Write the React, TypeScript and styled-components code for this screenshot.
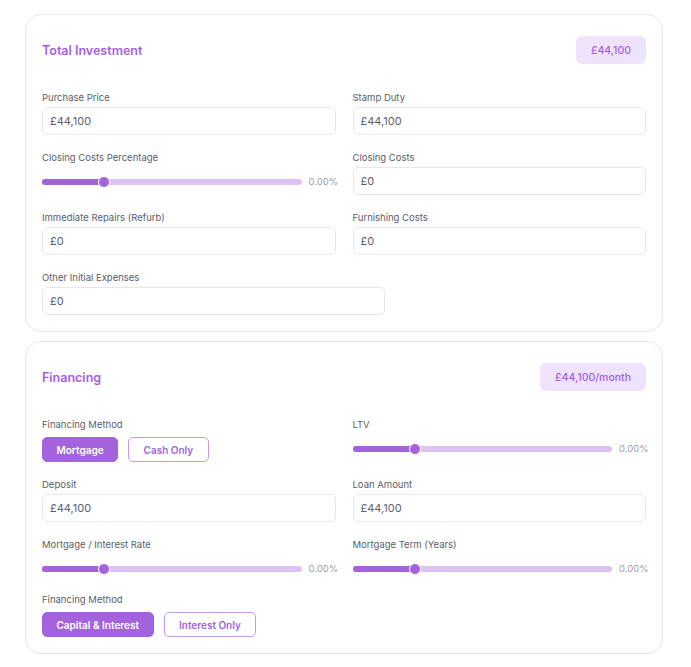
import { createGlobalStyle } from "styled-components";
import styled from "styled-components";

const Colors = {
    purple: "#a463dd",
    purpleLight: "#dcc3f4",
    outline: "#c397ee",
    badge: "#efe3fb",
    title: "#a45ee2",
    border: "#e7e7eb",
    label: "#5d5d68",
    text: "#60606a",
    muted: "#a0a0aa",
};

const GlobalStyle = createGlobalStyle`
    * { box-sizing: border-box; }
    body {
        margin: 0;
        background: #ffffff;
        font-family: Inter, "Noto Sans", sans-serif;
        -webkit-font-smoothing: antialiased;
    }
`;

interface SliderProps {
    value: number;
}

const Slider = ({ value }: SliderProps) => (
    <SliderRow>
        <Track>
            <Fill style={{ width: `${value}%` }} />
            <Thumb style={{ left: `${value}%` }} />
        </Track>
        <SliderValue>0.00%</SliderValue>
    </SliderRow>
);

interface FieldProps {
    label: string;
    value?: string;
    slider?: number;
    wide?: boolean;
}

const Field = ({ label, value, slider, wide }: FieldProps) => (
    <FieldBox>
        <Label>{label}</Label>
        {slider !== undefined ? (
            <Slider value={slider} />
        ) : (
            <Input wide={wide} readOnly value={value} />
        )}
    </FieldBox>
);

interface ToggleProps {
    label: string;
    options: string[];
}

const Toggle = ({ label, options }: ToggleProps) => (
    <FieldBox>
        <Label>{label}</Label>
        <ButtonGroup>
            {options.map((option, i) => (
                <OptionButton key={option} active={i === 0}>{option}</OptionButton>
            ))}
        </ButtonGroup>
    </FieldBox>
);

const App = () => {
    return (
        <Page>
            <GlobalStyle />
            <Card>
                <Header>
                    <Title>Total Investment</Title>
                    <Badge>£44,100</Badge>
                </Header>
                <Grid>
                    <Field label="Purchase Price" value="£44,100" />
                    <Field label="Stamp Duty" value="£44,100" />
                    <Field label="Closing Costs Percentage" slider={24} />
                    <Field label="Closing Costs" value="£0" />
                    <Field label="Immediate Repairs (Refurb)" value="£0" />
                    <Field label="Furnishing Costs" value="£0" />
                    <FullRow>
                        <Field label="Other Initial Expenses" value="£0" wide />
                    </FullRow>
                </Grid>
            </Card>
            <Card>
                <Header>
                    <Title>Financing</Title>
                    <Badge>£44,100/month</Badge>
                </Header>
                <Grid>
                    <Toggle label="Financing Method" options={["Mortgage", "Cash Only"]} />
                    <Field label="LTV" slider={24} />
                    <Field label="Deposit" value="£44,100" />
                    <Field label="Loan Amount" value="£44,100" />
                    <Field label="Mortgage / Interest Rate" slider={24} />
                    <Field label="Mortgage Term (Years)" slider={24} />
                    <Toggle label="Financing Method" options={["Capital & Interest", "Interest Only"]} />
                </Grid>
            </Card>
        </Page>
    );
};

const Page = styled.div`
    display: flex;
    flex-direction: column;
    gap: 9px;
    width: 638px;
    margin: 14px 0 0 25px;
`;

const Card = styled.section`
    background: #ffffff;
    border: 1px solid ${Colors.border};
    border-radius: 16px;
    padding: 16px;
`;

const Header = styled.div`
    display: flex;
    align-items: center;
    justify-content: space-between;
    padding: 5px 0;
    margin-bottom: 22px;
`;

const Title = styled.h2`
    margin: 0;
    font-size: 12.5px;
    font-weight: 600;
    color: ${Colors.title};
`;

const Badge = styled.div`
    display: flex;
    align-items: center;
    height: 28px;
    padding: 0 15px;
    border-radius: 6px;
    background: ${Colors.badge};
    color: ${Colors.title};
    font-size: 10.5px;
    font-weight: 500;
`;

const Grid = styled.div`
    display: grid;
    grid-template-columns: minmax(0, 1fr) minmax(0, 1fr);
    column-gap: 17px;
    row-gap: 16px;
`;

const FullRow = styled.div`
    grid-column: 1 / -1;
`;

const FieldBox = styled.div`
    display: flex;
    flex-direction: column;
    min-width: 0;
`;

const Label = styled.label`
    font-size: 9.5px;
    line-height: 14px;
    color: ${Colors.label};
    margin-bottom: 2px;
`;

const Input = styled.input<{ wide?: boolean }>`
    width: ${({ wide }) => (wide ? "343px" : "100%")};
    min-width: 0;
    height: 28px;
    padding: 0 7px;
    border: 1px solid ${Colors.border};
    border-radius: 5px;
    font-family: inherit;
    font-size: 11px;
    color: ${Colors.text};
    outline: none;
    background: #ffffff;
`;

const SliderRow = styled.div`
    display: flex;
    align-items: flex-start;
    gap: 7px;
    height: 23px;
    padding-top: 9px;
`;

const Track = styled.div`
    position: relative;
    flex: 1;
    height: 6px;
    margin-top: 3px;
    border-radius: 3px;
    background: ${Colors.purpleLight};
`;

const Fill = styled.div`
    height: 100%;
    border-radius: 3px;
    background: ${Colors.purple};
`;

const Thumb = styled.div`
    position: absolute;
    top: 50%;
    width: 12px;
    height: 12px;
    border-radius: 50%;
    background: ${Colors.purple};
    border: 1px solid #ffffff;
    transform: translate(-50%, -50%);
`;

const SliderValue = styled.span`
    width: 27px;
    text-align: right;
    font-size: 9.5px;
    line-height: 12px;
    color: ${Colors.muted};
`;

const ButtonGroup = styled.div`
    display: flex;
    gap: 10px;
    margin-top: 3px;
`;

const OptionButton = styled.button<{ active?: boolean }>`
    height: 25px;
    border-radius: 5px;
    font-family: inherit;
    font-size: 10px;
    font-weight: 600;
    cursor: pointer;
    ${({ active }) => `
        padding: 0 ${active ? "13.5px" : "14.5px"};
        background: ${active ? Colors.purple : "#ffffff"};
        border: 1px solid ${active ? Colors.purple : Colors.outline};
        color: ${active ? "#ffffff" : Colors.purple};
    `};
`;

export default App;
